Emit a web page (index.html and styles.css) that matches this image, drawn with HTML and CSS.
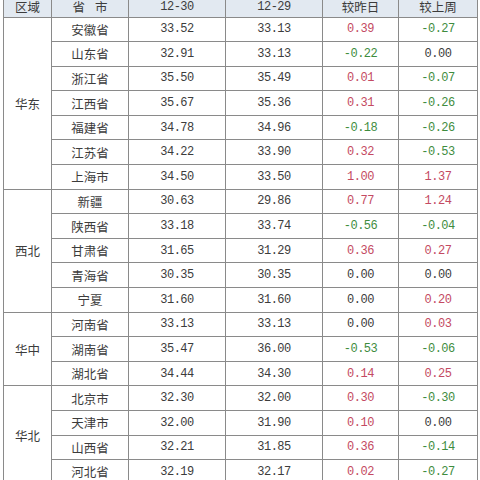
FILE: index.html
```html
<!DOCTYPE html>
<html lang="zh">
<head>
<meta charset="utf-8">
<link rel="stylesheet" href="styles.css">
</head>
<body>
<div class="frame">
<table class="grid">
<colgroup><col class="c-region"><col class="c-prov"><col class="c-val"><col class="c-val"><col class="c-d1"><col class="c-d2"></colgroup>
<thead>
<tr class="head"><th class="zh">区域</th><th class="zh"><span class="sp">省</span>市</th><th class="num">12-30</th><th class="num">12-29</th><th class="zh">较昨日</th><th class="zh">较上周</th></tr>
</thead>
<tbody>
<tr><td class="zh region" rowspan="7">华东</td><td class="zh">安徽省</td><td class="num">33.52</td><td class="num">33.13</td><td class="num up">0.39</td><td class="num down">-0.27</td></tr>
<tr><td class="zh">山东省</td><td class="num">32.91</td><td class="num">33.13</td><td class="num down">-0.22</td><td class="num">0.00</td></tr>
<tr><td class="zh">浙江省</td><td class="num">35.50</td><td class="num">35.49</td><td class="num up">0.01</td><td class="num down">-0.07</td></tr>
<tr><td class="zh">江西省</td><td class="num">35.67</td><td class="num">35.36</td><td class="num up">0.31</td><td class="num down">-0.26</td></tr>
<tr><td class="zh">福建省</td><td class="num">34.78</td><td class="num">34.96</td><td class="num down">-0.18</td><td class="num down">-0.26</td></tr>
<tr><td class="zh">江苏省</td><td class="num">34.22</td><td class="num">33.90</td><td class="num up">0.32</td><td class="num down">-0.53</td></tr>
<tr><td class="zh">上海市</td><td class="num">34.50</td><td class="num">33.50</td><td class="num up">1.00</td><td class="num up">1.37</td></tr>
<tr><td class="zh region" rowspan="5">西北</td><td class="zh">新疆</td><td class="num">30.63</td><td class="num">29.86</td><td class="num up">0.77</td><td class="num up">1.24</td></tr>
<tr><td class="zh">陕西省</td><td class="num">33.18</td><td class="num">33.74</td><td class="num down">-0.56</td><td class="num down">-0.04</td></tr>
<tr><td class="zh">甘肃省</td><td class="num">31.65</td><td class="num">31.29</td><td class="num up">0.36</td><td class="num up">0.27</td></tr>
<tr><td class="zh">青海省</td><td class="num">30.35</td><td class="num">30.35</td><td class="num">0.00</td><td class="num">0.00</td></tr>
<tr><td class="zh">宁夏</td><td class="num">31.60</td><td class="num">31.60</td><td class="num">0.00</td><td class="num up">0.20</td></tr>
<tr><td class="zh region" rowspan="3">华中</td><td class="zh">河南省</td><td class="num">33.13</td><td class="num">33.13</td><td class="num">0.00</td><td class="num up">0.03</td></tr>
<tr><td class="zh">湖南省</td><td class="num">35.47</td><td class="num">36.00</td><td class="num down">-0.53</td><td class="num down">-0.06</td></tr>
<tr><td class="zh">湖北省</td><td class="num">34.44</td><td class="num">34.30</td><td class="num up">0.14</td><td class="num up">0.25</td></tr>
<tr><td class="zh region" rowspan="4">华北</td><td class="zh">北京市</td><td class="num">32.30</td><td class="num">32.00</td><td class="num up">0.30</td><td class="num down">-0.30</td></tr>
<tr><td class="zh">天津市</td><td class="num">32.00</td><td class="num">31.90</td><td class="num up">0.10</td><td class="num">0.00</td></tr>
<tr><td class="zh">山西省</td><td class="num">32.21</td><td class="num">31.85</td><td class="num up">0.36</td><td class="num down">-0.14</td></tr>
<tr><td class="zh">河北省</td><td class="num">32.19</td><td class="num">32.17</td><td class="num up">0.02</td><td class="num down">-0.27</td></tr>
</tbody>
</table>
</div>
</body>
</html>
```
FILE: styles.css
```css
html, body {
  margin: 0;
  padding: 0;
  background: #ffffff;
}
.frame {
  width: 480px;
  height: 480px;
  overflow: hidden;
  padding-left: 3px;
  box-sizing: border-box;
}
.grid {
  border-collapse: collapse;
  table-layout: fixed;
  width: 475px;
  color: #3c3c3c;
}
.c-region { width: 48px; }
.c-prov { width: 77px; }
.c-val { width: 97px; }
.c-d1 { width: 76px; }
.c-d2 { width: 79px; }
.grid tbody tr { height: 24.6px; }
.grid th, .grid td {
  border: 1px solid #8a8a8a;
  padding: 0;
  text-align: center;
  vertical-align: middle;
  font-weight: normal;
  white-space: nowrap;
}
.grid thead tr { height: 17px; }
.head th {
  background: #e2e9f1;
  border-top: none;
  line-height: 12px;
  padding-bottom: 3px;
}
.zh {
  font-family: "Noto Sans CJK SC", "Noto Sans", sans-serif;
  font-size: 12.5px;
  font-weight: 300;
}
.num {
  font-family: "Liberation Mono", "DejaVu Sans Mono", monospace;
  font-size: 12px;
  letter-spacing: -0.5px;
}
.sp { margin-right: 10px; }
.up { color: #c44a62; }
.down { color: #3e8c3e; }
```
